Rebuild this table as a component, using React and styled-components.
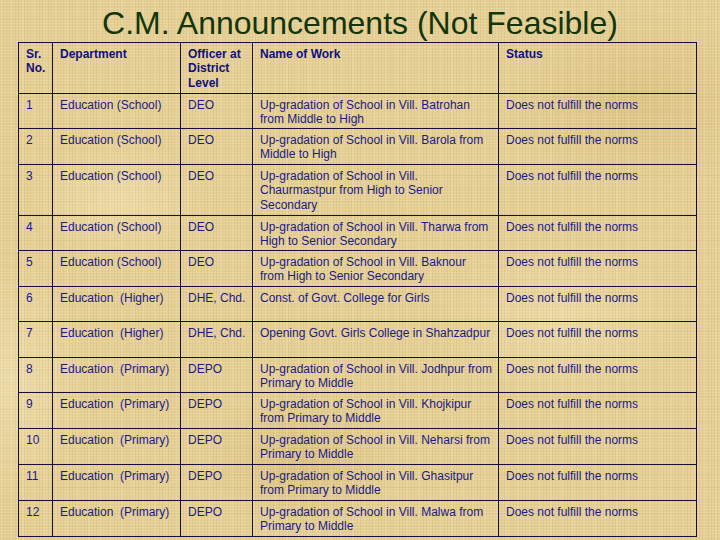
import React from 'react';
import styled, { createGlobalStyle } from 'styled-components';

const rows = [
  ['1', 'Education (School)', 'DEO', ['Up-gradation of School in Vill. Batrohan', 'from Middle to High']],
  ['2', 'Education (School)', 'DEO', ['Up-gradation of School in Vill. Barola from', 'Middle to High']],
  ['3', 'Education (School)', 'DEO', ['Up-gradation of School in Vill.', 'Chaurmastpur from High to Senior', 'Secondary']],
  ['4', 'Education (School)', 'DEO', ['Up-gradation of School in Vill. Tharwa from', 'High to Senior Secondary']],
  ['5', 'Education (School)', 'DEO', ['Up-gradation of School in Vill. Baknour', 'from High to Senior Secondary']],
  ['6', 'Education\u00a0 (Higher)', 'DHE, Chd.', ['Const. of Govt. College for Girls']],
  ['7', 'Education\u00a0 (Higher)', 'DHE, Chd.', ['Opening Govt. Girls College in Shahzadpur']],
  ['8', 'Education\u00a0 (Primary)', 'DEPO', ['Up-gradation of School in Vill. Jodhpur from', 'Primary to Middle']],
  ['9', 'Education\u00a0 (Primary)', 'DEPO', ['Up-gradation of School in Vill. Khojkipur', 'from Primary to Middle']],
  ['10', 'Education\u00a0 (Primary)', 'DEPO', ['Up-gradation of School in Vill. Neharsi from', 'Primary to Middle']],
  ['11', 'Education\u00a0 (Primary)', 'DEPO', ['Up-gradation of School in Vill. Ghasitpur', 'from Primary to Middle']],
  ['12', 'Education\u00a0 (Primary)', 'DEPO', ['Up-gradation of School in Vill. Malwa from', 'Primary to Middle']],
];

const GlobalStyle = createGlobalStyle`
  html, body { margin: 0; padding: 0; }
  body { font-family: "Liberation Sans", Arial, sans-serif; }
`;

const Slide = styled.div`
  width: 720px;
  height: 540px;
  overflow: hidden;
  background-color: #e5cf95;
  background-image:
    repeating-linear-gradient(90deg, rgba(140, 100, 30, 0.08) 0 1px, transparent 1px 3px),
    repeating-linear-gradient(0deg, rgba(255, 248, 215, 0.16) 0 1px, transparent 1px 3px),
    repeating-linear-gradient(90deg, rgba(255, 245, 210, 0.12) 0 2px, transparent 2px 11px),
    repeating-linear-gradient(0deg, rgba(150, 110, 40, 0.06) 0 1px, transparent 1px 13px),
    radial-gradient(ellipse 90px 60px at 120px 200px, rgba(245, 230, 185, 0.5), transparent),
    radial-gradient(ellipse 120px 80px at 560px 320px, rgba(245, 230, 185, 0.45), transparent),
    radial-gradient(ellipse 100px 70px at 300px 460px, rgba(205, 175, 105, 0.4), transparent),
    radial-gradient(ellipse 140px 90px at 640px 100px, rgba(205, 175, 105, 0.35), transparent),
    radial-gradient(ellipse 80px 120px at 10px 380px, rgba(245, 232, 190, 0.5), transparent);
`;

const Title = styled.h1`
  margin: 0;
  padding-top: 5px;
  height: 37px;
  line-height: 37px;
  text-align: center;
  font-family: "Liberation Sans", Arial, sans-serif;
  font-weight: normal;
  font-size: 32px;
  color: #123608;
`;

const Table = styled.table`
  margin-left: 18px;
  width: 678px;
  border-collapse: collapse;
  table-layout: fixed;
  border: 1.5px solid #150f3a;
`;

const Col = styled.col`
  width: ${(p) => p.$w}px;
`;

const Row = styled.tr`
  height: ${(p) => p.$h}px;
`;

const Cell = styled.td`
  border: 1.5px solid #150f3a;
  padding: 4px 3px 0 7px;
  vertical-align: top;
  text-align: left;
  font-size: 12px;
  line-height: 14.4px;
  color: ${(p) => (p.$head ? '#10107e' : '#1a1a88')};
  font-weight: ${(p) => (p.$head ? 'bold' : 'normal')};
  white-space: ${(p) => (p.$head ? 'normal' : 'nowrap')};
`;

// row heights measured from the slide
const heights = [35, 36, 51, 35, 36, 35, 36, 35, 36, 36, 36, 36];

export default function App() {
  return (
    <>
      <GlobalStyle />
      <Slide>
        <Title>C.M. Announcements (Not Feasible)</Title>
        <Table>
          <colgroup>
            <Col $w={34} />
            <Col $w={128} />
            <Col $w={72} />
            <Col $w={246} />
            <Col $w={198} />
          </colgroup>
          <thead>
            <Row $h={51}>
              <Cell as="th" $head>Sr. No.</Cell>
              <Cell as="th" $head>Department</Cell>
              <Cell as="th" $head>Officer at District Level</Cell>
              <Cell as="th" $head>Name of Work</Cell>
              <Cell as="th" $head>Status</Cell>
            </Row>
          </thead>
          <tbody>
            {rows.map(([no, dept, officer, work], r) => (
              <Row key={no} $h={heights[r]}>
                <Cell>{no}</Cell>
                <Cell>{dept}</Cell>
                <Cell>{officer}</Cell>
                <Cell>
                  {work.map((line, i) => (
                    <React.Fragment key={i}>
                      {i > 0 && <br />}
                      {line}
                    </React.Fragment>
                  ))}
                </Cell>
                <Cell>Does not fulfill the norms</Cell>
              </Row>
            ))}
          </tbody>
        </Table>
      </Slide>
    </>
  );
}
